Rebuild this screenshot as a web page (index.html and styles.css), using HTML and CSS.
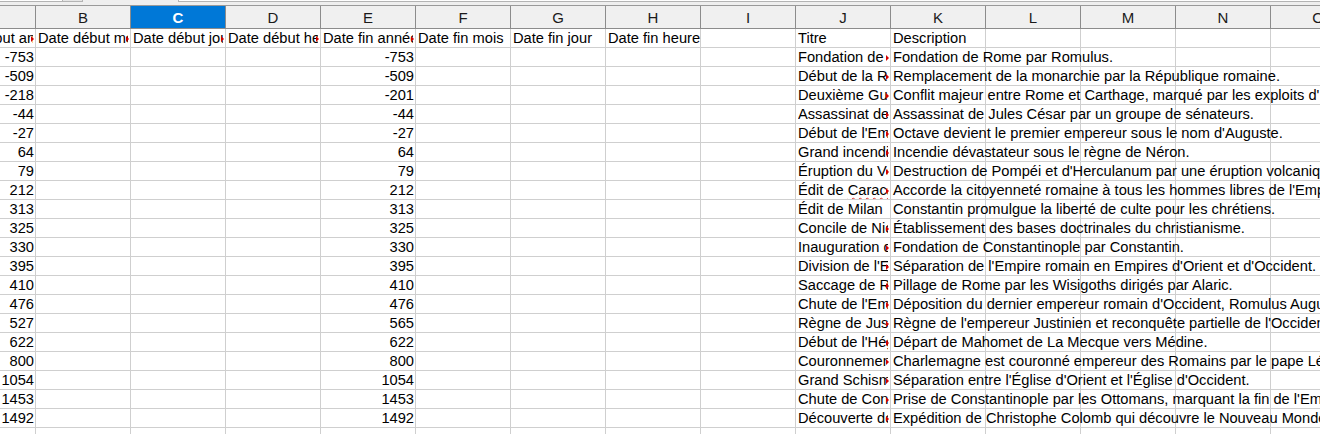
FILE: index.html
```html
<!DOCTYPE html>
<html lang="fr">

<head>
    <meta charset="UTF-8">
    <meta name="viewport" content="width=device-width, initial-scale=1.0">
    <title>Chronologie - Calc</title>

    <link rel="stylesheet" href="styles.css">
</head>

<body>
    <div class="toolbar">
        <div class="name-box"></div>
        <div class="name-btn"></div>
        <div class="spacer"></div>
        <div class="formula-box"></div>
    </div>

    <div class="sheet">
        <table>
            <colgroup>
                <col><col><col><col><col><col><col><col><col><col><col><col><col><col><col>
            </colgroup>
            <thead>
                <tr>
                    <th>A</th><th>B</th><th class="selected">C</th><th>D</th><th>E</th><th>F</th><th>G</th><th>H</th>
                    <th>I</th><th>J</th><th>K</th><th>L</th><th>M</th><th>N</th><th>O</th>
                </tr>
            </thead>
            <tbody>
                <tr>
                    <td class="clip"><div>Date début année</div></td>
                    <td class="clip"><div>Date début mois</div></td>
                    <td class="clip"><div>Date début jour</div></td>
                    <td class="clip"><div>Date début heure</div></td>
                    <td class="clip"><div>Date fin année</div></td>
                    <td>Date fin mois</td><td>Date fin jour</td><td>Date fin heure</td><td></td>
                    <td>Titre</td><td>Description</td><td></td><td></td><td></td><td></td>
                </tr>
                <tr>
                    <td class="num">-753</td><td></td><td></td><td></td><td class="num">-753</td><td></td><td></td><td></td><td></td>
                    <td class="clip"><div>Fondation de Rome</div></td>
                    <td>Fondation de Rome par Romulus.</td><td></td><td></td><td></td><td></td>
                </tr>
                <tr>
                    <td class="num">-509</td><td></td><td></td><td></td><td class="num">-509</td><td></td><td></td><td></td><td></td>
                    <td class="clip"><div>Début de la République romaine</div></td>
                    <td>Remplacement de la monarchie par la République romaine.</td><td></td><td></td><td></td><td></td>
                </tr>
                <tr>
                    <td class="num">-218</td><td></td><td></td><td></td><td class="num">-201</td><td></td><td></td><td></td><td></td>
                    <td class="clip"><div>Deuxième Guerre punique</div></td>
                    <td>Conflit majeur entre Rome et Carthage, marqué par les exploits d'Hannibal.</td><td></td><td></td><td></td><td></td>
                </tr>
                <tr>
                    <td class="num">-44</td><td></td><td></td><td></td><td class="num">-44</td><td></td><td></td><td></td><td></td>
                    <td class="clip"><div>Assassinat de Jules César</div></td>
                    <td>Assassinat de Jules César par un groupe de sénateurs.</td><td></td><td></td><td></td><td></td>
                </tr>
                <tr>
                    <td class="num">-27</td><td></td><td></td><td></td><td class="num">-27</td><td></td><td></td><td></td><td></td>
                    <td class="clip"><div>Début de l'Empire romain</div></td>
                    <td>Octave devient le premier empereur sous le nom d'Auguste.</td><td></td><td></td><td></td><td></td>
                </tr>
                <tr>
                    <td class="num">64</td><td></td><td></td><td></td><td class="num">64</td><td></td><td></td><td></td><td></td>
                    <td class="clip"><div>Grand incendie de Rome</div></td>
                    <td>Incendie dévastateur sous le règne de Néron.</td><td></td><td></td><td></td><td></td>
                </tr>
                <tr>
                    <td class="num">79</td><td></td><td></td><td></td><td class="num">79</td><td></td><td></td><td></td><td></td>
                    <td class="clip"><div>Éruption du Vésuve</div></td>
                    <td>Destruction de Pompéi et d'Herculanum par une éruption volcanique.</td><td></td><td></td><td></td><td></td>
                </tr>
                <tr>
                    <td class="num">212</td><td></td><td></td><td></td><td class="num">212</td><td></td><td></td><td></td><td></td>
                    <td class="clip"><div>Édit de <span class="typo">Caracalla</span></div></td>
                    <td>Accorde la citoyenneté romaine à tous les hommes libres de l'Empire.</td><td></td><td></td><td></td><td></td>
                </tr>
                <tr>
                    <td class="num">313</td><td></td><td></td><td></td><td class="num">313</td><td></td><td></td><td></td><td></td>
                    <td>Édit de Milan</td>
                    <td>Constantin promulgue la liberté de culte pour les chrétiens.</td><td></td><td></td><td></td><td></td>
                </tr>
                <tr>
                    <td class="num">325</td><td></td><td></td><td></td><td class="num">325</td><td></td><td></td><td></td><td></td>
                    <td class="clip"><div>Concile de Nicée</div></td>
                    <td>Établissement des bases doctrinales du christianisme.</td><td></td><td></td><td></td><td></td>
                </tr>
                <tr>
                    <td class="num">330</td><td></td><td></td><td></td><td class="num">330</td><td></td><td></td><td></td><td></td>
                    <td class="clip"><div>Inauguration de Constantinople</div></td>
                    <td>Fondation de Constantinople par Constantin.</td><td></td><td></td><td></td><td></td>
                </tr>
                <tr>
                    <td class="num">395</td><td></td><td></td><td></td><td class="num">395</td><td></td><td></td><td></td><td></td>
                    <td class="clip"><div>Division de l'Empire romain</div></td>
                    <td>Séparation de l'Empire romain en Empires d'Orient et d'Occident.</td><td></td><td></td><td></td><td></td>
                </tr>
                <tr>
                    <td class="num">410</td><td></td><td></td><td></td><td class="num">410</td><td></td><td></td><td></td><td></td>
                    <td class="clip"><div>Saccage de Rome</div></td>
                    <td>Pillage de Rome par les Wisigoths dirigés par Alaric.</td><td></td><td></td><td></td><td></td>
                </tr>
                <tr>
                    <td class="num">476</td><td></td><td></td><td></td><td class="num">476</td><td></td><td></td><td></td><td></td>
                    <td class="clip"><div>Chute de l'Empire romain d'Occident</div></td>
                    <td>Déposition du dernier empereur romain d'Occident, Romulus Augustule.</td><td></td><td></td><td></td><td></td>
                </tr>
                <tr>
                    <td class="num">527</td><td></td><td></td><td></td><td class="num">565</td><td></td><td></td><td></td><td></td>
                    <td class="clip"><div>Règne de Justinien</div></td>
                    <td>Règne de l'empereur Justinien et reconquête partielle de l'Occident.</td><td></td><td></td><td></td><td></td>
                </tr>
                <tr>
                    <td class="num">622</td><td></td><td></td><td></td><td class="num">622</td><td></td><td></td><td></td><td></td>
                    <td class="clip"><div>Début de l'Hégire</div></td>
                    <td>Départ de Mahomet de La Mecque vers Médine.</td><td></td><td></td><td></td><td></td>
                </tr>
                <tr>
                    <td class="num">800</td><td></td><td></td><td></td><td class="num">800</td><td></td><td></td><td></td><td></td>
                    <td class="clip"><div>Couronnement de Charlemagne</div></td>
                    <td>Charlemagne est couronné empereur des Romains par le pape Léon III.</td><td></td><td></td><td></td><td></td>
                </tr>
                <tr>
                    <td class="num">1054</td><td></td><td></td><td></td><td class="num">1054</td><td></td><td></td><td></td><td></td>
                    <td class="clip"><div>Grand Schisme d'Orient</div></td>
                    <td>Séparation entre l'Église d'Orient et l'Église d'Occident.</td><td></td><td></td><td></td><td></td>
                </tr>
                <tr>
                    <td class="num">1453</td><td></td><td></td><td></td><td class="num">1453</td><td></td><td></td><td></td><td></td>
                    <td class="clip"><div>Chute de Constantinople</div></td>
                    <td>Prise de Constantinople par les Ottomans, marquant la fin de l'Empire byzantin.</td><td></td><td></td><td></td><td></td>
                </tr>
                <tr>
                    <td class="num">1492</td><td></td><td></td><td></td><td class="num">1492</td><td></td><td></td><td></td><td></td>
                    <td class="clip"><div>Découverte de l'Amérique</div></td>
                    <td>Expédition de Christophe Colomb qui découvre le Nouveau Monde.</td><td></td><td></td><td></td><td></td>
                </tr>
                <tr>
                    <td></td><td></td><td></td><td></td><td></td><td></td><td></td><td></td><td></td><td></td><td></td><td></td><td></td><td></td><td></td>
                </tr>
            </tbody>
        </table>
    </div>
</body>

</html>
```

FILE: styles.css
```css
* {
    margin: 0;
    padding: 0;
    box-sizing: border-box;
}

body {
    width: 1320px;
    height: 434px;
    overflow: hidden;
    background-color: white;
    font-family: "Liberation Sans", Arial, sans-serif;
    font-size: 14.67px;
    color: black;
}

/* bottom edge of the name box / formula bar */
.toolbar {
    display: flex;
    height: 6px;
    background-color: #efefef;
    border-bottom: 1px solid #9a9a9a;
}

.name-box {
    width: 63px;
    height: 2px;
    background-color: white;
    border-right: 1px solid #b4b4b4;
    border-bottom: 1px solid #b4b4b4;
}

.name-btn {
    width: 20px;
    height: 2px;
    background-color: #e6e6e6;
    border-right: 1px solid #b4b4b4;
    border-bottom: 1px solid #b4b4b4;
}

.spacer {
    width: 95px;
}

.formula-box {
    flex: 1;
    height: 2px;
    background-color: white;
    border-left: 1px solid #b4b4b4;
    border-bottom: 1px solid #b4b4b4;
}

.sheet {
    overflow: hidden;
}

table {
    border-collapse: separate;
    border-spacing: 0;
    table-layout: fixed;
    width: 1425px;
    margin-left: -59px;
}

col {
    width: 95px;
}

th {
    height: 23px;
    background-color: #f0f0f0;
    border-right: 1px solid #8c8c8c;
    border-bottom: 1px solid #8c8c8c;
    font-weight: normal;
    text-align: center;
    vertical-align: middle;
    color: #1a1a1a;
    font-size: 15px;
}

th.selected {
    background-color: #0078d7;
    color: white;
    font-weight: bold;
}

td {
    height: 19px;
    padding: 0 2px 0 2px;
    border-right: 1px solid #cfcfcf;
    border-bottom: 1px solid #cfcfcf;
    white-space: nowrap;
    overflow: visible;
    line-height: 18px;
    vertical-align: middle;
}

td.num {
    text-align: right;
    padding-right: 1px;
}

td.clip div {
    position: relative;
    overflow: hidden;
    padding-right: 3px;
}

/* red arrow LibreOffice draws when text is cut */
td.clip {
    position: relative;
}

td.clip::after {
    content: "";
    position: absolute;
    right: 1px;
    top: 7px;
    border-top: 3px solid transparent;
    border-bottom: 3px solid transparent;
    border-left: 3px solid #d40000;
}

.typo {
    text-decoration: underline wavy #e03030;
    text-decoration-thickness: 1px;
    text-underline-offset: 2px;
    text-decoration-skip-ink: none;
}
```
